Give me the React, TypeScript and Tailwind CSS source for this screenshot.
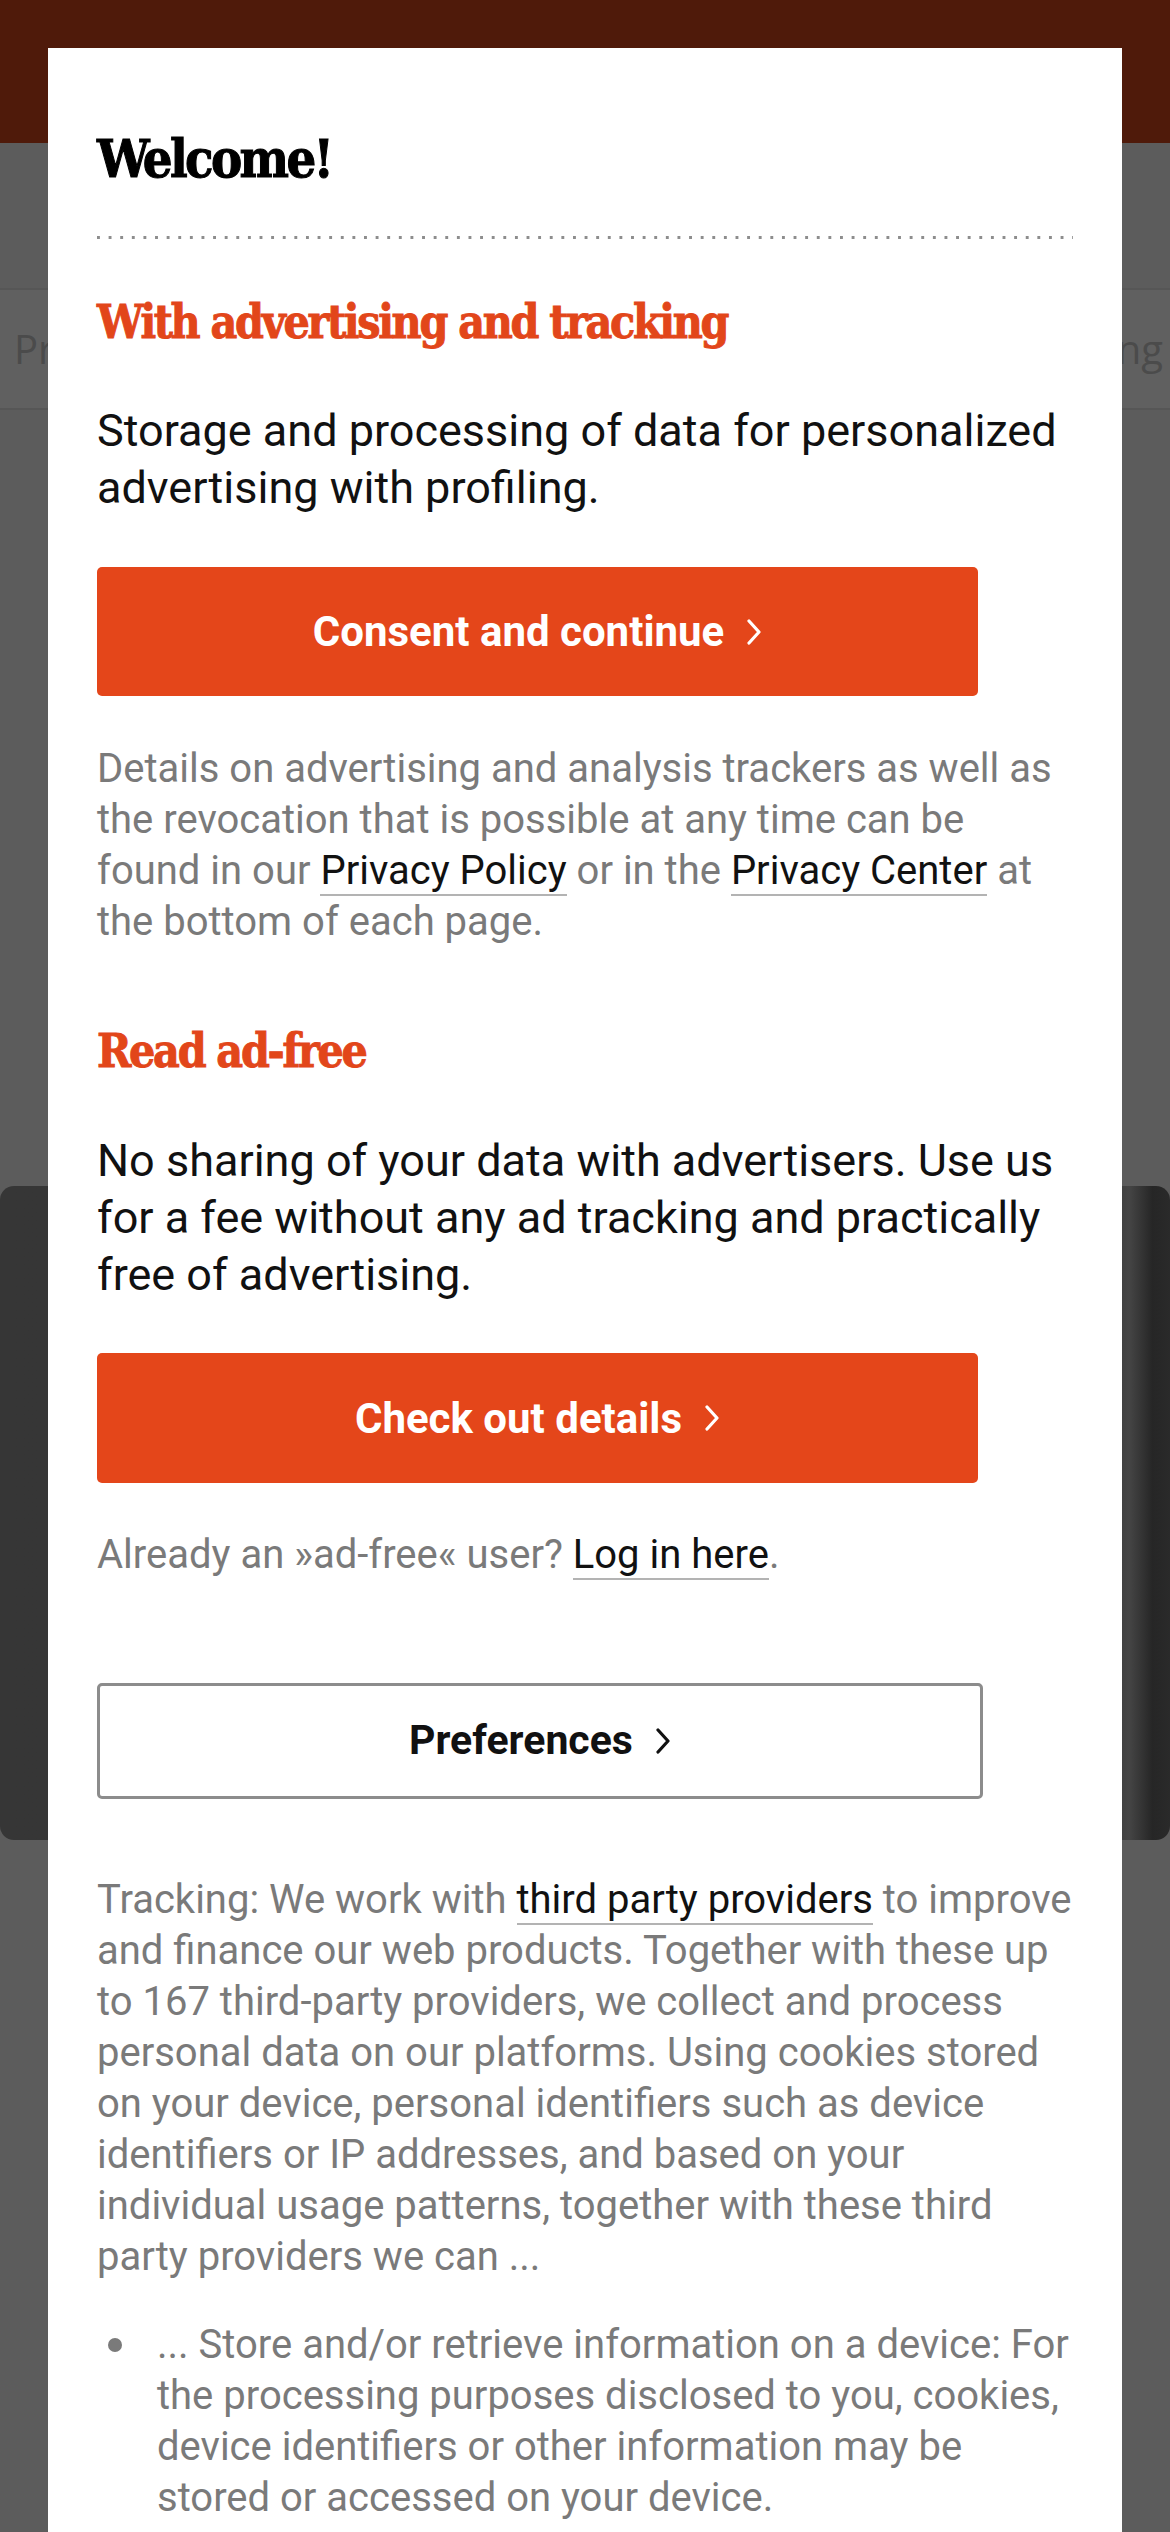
function Chevron({ color }: { color: string }) {
  return (
    <svg width="16" height="26" viewBox="0 0 16 26" className="ml-[22px] shrink-0" aria-hidden>
      <polyline points="3,2 13,13 3,24" fill="none" stroke={color} strokeWidth="3.2" strokeLinecap="round" strokeLinejoin="round" />
    </svg>
  );
}

function Line({ children }: { children: React.ReactNode }) {
  return <span className="block whitespace-nowrap">{children}</span>;
}

function Link({ children }: { children: React.ReactNode }) {
  return <span className="text-[#111111] border-b-2 border-[#b3b3b3]">{children}</span>;
}

export default function App() {
  return (
    <div className="relative w-[1170px] h-[2532px] overflow-hidden bg-[#5c5c5c] font-['Roboto',sans-serif]">
      {/* background page (dimmed) */}
      <div className="h-[143px] bg-[#4f1a0a]" />
      <div className="h-[145px]" />
      <div className="h-[122px] bg-[#606060] border-y-2 border-[#565656] flex items-center justify-between font-['Open_Sans',sans-serif] text-[40px] text-[#4b4b4b]">
        <div className="w-[48px] overflow-hidden whitespace-nowrap pl-[14px]">Pr</div>
        <div className="w-[48px] overflow-hidden whitespace-nowrap flex justify-end pr-[7px]">ng</div>
      </div>
      <div className="h-[776px]" />
      <div className="h-[654px] rounded-[14px] bg-[linear-gradient(to_right,#363636_0%,#353535_94%,#454545_96.5%,#262626_98.5%,#2a2a2a_100%)]" />

      {/* modal */}
      <div className="absolute left-[48px] top-[48px] w-[1074px] h-[2600px] bg-white pl-[49px] pr-[49px] pt-[81px]">
        <h1 className="font-['DejaVu_Serif_Condensed','DejaVu_Serif',serif] font-bold text-[52px] leading-[60px] tracking-[-2.6px] text-black [-webkit-text-stroke:1px_#000000]">
          Welcome!
        </h1>
        <div className="mt-[47px] h-[3px] w-[976px] bg-[linear-gradient(to_right,#8d8d8d_3px,transparent_3px)] bg-[length:11.62px_3px] bg-repeat-x" />

        <h2 className="mt-[56px] font-['DejaVu_Serif_Condensed','DejaVu_Serif',serif] font-bold text-[46px] leading-[54px] tracking-[-2.3px] text-[#e2461a] [-webkit-text-stroke:0.9px_#e2461a]">
          With advertising and tracking
        </h2>
        <p className="mt-[53px] text-[45px] leading-[57px] text-[#111111]">
          <Line>Storage and processing of data for personalized</Line>
          <Line>advertising with profiling.</Line>
        </p>
        <button className="mt-[51px] flex h-[129px] w-[881px] items-center justify-center rounded-[5px] bg-[#e4461a] text-[42px] font-bold text-white">
          <span>Consent and continue</span>
          <Chevron color="#ffffff" />
        </button>
        <p className="mt-[47px] text-[40px] leading-[51px] text-[#7a7a7a]">
          <Line>Details on advertising and analysis trackers as well as</Line>
          <Line>the revocation that is possible at any time can be</Line>
          <Line>
            found in our <Link>Privacy Policy</Link> or in the <Link>Privacy Center</Link> at
          </Line>
          <Line>the bottom of each page.</Line>
        </p>

        <h2 className="mt-[77px] font-['DejaVu_Serif_Condensed','DejaVu_Serif',serif] font-bold text-[46px] leading-[54px] tracking-[-2.3px] text-[#e2461a] [-webkit-text-stroke:0.9px_#e2461a]">
          Read ad-free
        </h2>
        <p className="mt-[54px] text-[45px] leading-[57px] text-[#111111]">
          <Line>No sharing of your data with advertisers. Use us</Line>
          <Line>for a fee without any ad tracking and practically</Line>
          <Line>free of advertising.</Line>
        </p>
        <button className="mt-[50px] flex h-[130px] w-[881px] items-center justify-center rounded-[5px] bg-[#e4461a] text-[42px] font-bold text-white">
          <span>Check out details</span>
          <Chevron color="#ffffff" />
        </button>
        <p className="mt-[46px] text-[40px] leading-[51px] text-[#7a7a7a]">
          <Line>
            Already an »ad-free« user? <Link>Log in here</Link>.
          </Line>
        </p>

        <button className="mt-[103px] flex h-[116px] w-[886px] items-center justify-center rounded-[5px] border-[3px] border-[#8c8c8c] bg-white text-[41px] font-bold text-[#111111]">
          <span>Preferences</span>
          <Chevron color="#111111" />
        </button>

        <p className="mt-[75px] text-[40px] leading-[51px] text-[#7a7a7a]">
          <Line>
            Tracking: We work with <Link>third party providers</Link> to improve
          </Line>
          <Line>and finance our web products. Together with these up</Line>
          <Line>to 167 third-party providers, we collect and process</Line>
          <Line>personal data on our platforms. Using cookies stored</Line>
          <Line>on your device, personal identifiers such as device</Line>
          <Line>identifiers or IP addresses, and based on your</Line>
          <Line>individual usage patterns, together with these third</Line>
          <Line>party providers we can ...</Line>
        </p>
        <ul className="mt-[37px] text-[40px] leading-[51px] text-[#7a7a7a]">
          <li className="flex">
            <span className="w-[60px] shrink-0 flex justify-start pl-[11px] pt-[19px]">
              <span className="block h-[14px] w-[14px] rounded-full bg-[#7a7a7a]" />
            </span>
            <span>
              <Line>... Store and/or retrieve information on a device: For</Line>
              <Line>the processing purposes disclosed to you, cookies,</Line>
              <Line>device identifiers or other information may be</Line>
              <Line>stored or accessed on your device.</Line>
            </span>
          </li>
        </ul>
      </div>
    </div>
  );
}
